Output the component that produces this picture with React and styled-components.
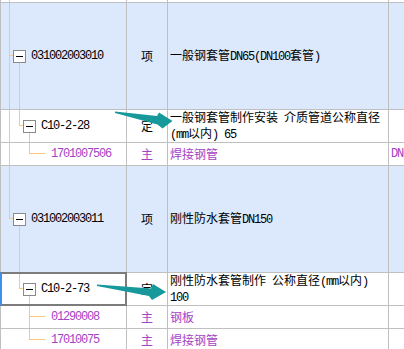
import React from "react";
import styled, { createGlobalStyle } from "styled-components";

const GlobalStyle = createGlobalStyle`
  html, body {
    margin: 0;
    padding: 0;
    background: #fff;
  }
  body {
    font-family: "Noto Sans CJK SC", "Liberation Sans", sans-serif;
    font-size: 12px;
    color: #000;
  }
`;

const PURPLE = "#a443c4";
const GUIDE = "#fbc77d";

const rows = [
  { h: 2, pass: [9] },
  {
    h: 106, tone: "blue", level: 0, box: true, next: true,
    code: "031002003010", kind: "项", desc: ["一般钢套管DN65(DN100套管)"],
  },
  {
    h: 32, level: 1, box: true, pass: [9],
    code: "C10-2-28", kind: "定", desc: ["一般钢套管制作安装 介质管道公称直径", "(mm以内) 65"],
  },
  {
    h: 22, level: 2, pass: [9], main: true,
    code: "1701007506", kind: "主", desc: ["焊接钢管"], spec: "DN65",
  },
  {
    h: 106, tone: "blue", level: 0, box: true,
    code: "031002003011", kind: "项", desc: ["刚性防水套管DN150"],
  },
  {
    h: 32, level: 1, box: true, selected: true,
    code: "C10-2-73", kind: "定", desc: ["刚性防水套管制作 公称直径(mm以内)", "100"],
  },
  {
    h: 22, level: 2, next: true, main: true,
    code: "01290008", kind: "主", desc: ["钢板"],
  },
  {
    h: 22, level: 2, main: true,
    code: "17010075", kind: "主", desc: ["焊接钢管"],
  },
];

const Page = styled.div`
  position: relative;
  width: 404px;
  height: 349px;
  overflow: hidden;
`;

const Table = styled.div`
  display: flex;
  flex-direction: column;
  gap: 1px;
  background: #c0c0c0;
`;

const Row = styled.div`
  display: grid;
  grid-template-columns: 125px 40px 220px 1fr;
  column-gap: 1px;
  padding-left: 1px;
  height: ${(p) => p.$h}px;
`;

const Cell = styled.div`
  background: ${(p) => (p.$tone === "blue" ? "#dce8fc" : "#fff")};
  color: ${(p) => (p.$main ? PURPLE : "#000")};
  min-width: 0;
`;

const TreeCell = styled(Cell)`
  position: relative;
  display: flex;
  align-items: center;
  padding-left: ${(p) => p.$indent}px;
`;

const KindCell = styled(Cell)`
  display: flex;
  align-items: center;
  justify-content: center;
  line-height: 14px;
`;

const DescCell = styled(Cell)`
  display: flex;
  flex-direction: column;
  justify-content: center;
  padding: 0 2px;
  line-height: 14px;
  white-space: nowrap;
`;

const SpecCell = styled(Cell)`
  display: flex;
  align-items: center;
  padding-left: 2px;
  overflow: hidden;
  white-space: nowrap;
  line-height: 14px;
`;

const VLine = styled.span`
  position: absolute;
  left: ${(p) => p.$x - 1}px;
  top: ${(p) => p.$top}px;
  bottom: ${(p) => p.$bottom}px;
  width: 1px;
  background: ${GUIDE};
`;

const HLine = styled.span`
  position: absolute;
  left: ${(p) => p.$x - 1}px;
  top: ${(p) => p.$y}px;
  width: ${(p) => p.$w}px;
  height: 1px;
  background: ${GUIDE};
`;

const Toggle = styled.span`
  position: relative;
  z-index: 1;
  box-sizing: border-box;
  width: 13px;
  height: 13px;
  margin-right: 5px;
  flex: none;
  border: 1px solid #8a8a8a;
  background: #fff;
  &::after {
    content: "";
    position: absolute;
    left: 2px;
    right: 2px;
    top: 5px;
    height: 1px;
    background: #000;
  }
`;

const Focus = styled.span`
  position: absolute;
  z-index: 2;
  top: -1px;
  left: -1px;
  right: -1px;
  bottom: -1px;
  border: 2px solid #7c7c7c;
  border-left-color: #3f8ff0;
`;

const Latin = styled.span`
  font-family: "Liberation Mono", monospace;
  font-size: 12px;
  letter-spacing: -1.2px;
`;

const Overlay = styled.svg`
  position: absolute;
  left: 0;
  top: 0;
  pointer-events: none;
  z-index: 5;
`;

const ASCII = /^[\x20-\x7e]+$/;

function Mixed({ text }) {
  return text
    .split(/([\x20-\x7e]+)/)
    .filter(Boolean)
    .map((part, i) =>
      ASCII.test(part) ? <Latin key={i}>{part}</Latin> : <React.Fragment key={i}>{part}</React.Fragment>
    );
}

function Tree({ row }) {
  const mid = Math.floor((row.h - 1) / 2);
  const lines = [];
  (row.pass || []).forEach((x) => lines.push(<VLine key={"p" + x} $x={x} $top={0} $bottom={0} />));

  if (row.level !== undefined) {
    const elbow = 9 + row.level * 10;
    const boxLeft = 13 + row.level * 10;
    lines.push(
      <VLine key="e" $x={elbow} $top={0} $bottom={row.next ? 0 : row.h - mid - 1} />
    );
    lines.push(
      <HLine key="h" $x={elbow} $y={mid} $w={row.box ? boxLeft - elbow : 16} />
    );
    if (row.box) {
      lines.push(<VLine key="d" $x={elbow + 10} $top={mid + 6} $bottom={0} />);
    }
  }

  const indent = row.level === undefined ? 0 : row.box ? 12 + row.level * 10 : 50;

  return (
    <TreeCell $tone={row.tone} $main={row.main} $indent={indent}>
      {lines}
      {row.box && <Toggle />}
      {row.code && <Latin>{row.code}</Latin>}
      {row.selected && <Focus />}
    </TreeCell>
  );
}

export default function App() {
  return (
    <Page>
      <GlobalStyle />
      <Table>
        {rows.map((row, i) => (
          <Row key={i} $h={row.h}>
            <Tree row={row} />
            <KindCell $tone={row.tone} $main={row.main}>{row.kind}</KindCell>
            <DescCell $tone={row.tone} $main={row.main}>
              {(row.desc || []).map((line, j) => (
                <div key={j}>
                  <Mixed text={line} />
                </div>
              ))}
            </DescCell>
            <SpecCell $tone={row.tone} $main={row.main}>
              {row.spec && <Latin>{row.spec}</Latin>}
            </SpecCell>
          </Row>
        ))}
      </Table>
      <Overlay width="404" height="349" viewBox="0 0 404 349">
        <polygon
          fill="#17989a"
          points="115,111.5 157,116 159,112.5 172.5,121 162.5,128.5 157.5,124.5 115,113"
        />
        <polygon
          fill="#17989a"
          points="97,284.5 151,288.5 153,284 166,292 152,300 149,296 97,286"
        />
      </Overlay>
    </Page>
  );
}
